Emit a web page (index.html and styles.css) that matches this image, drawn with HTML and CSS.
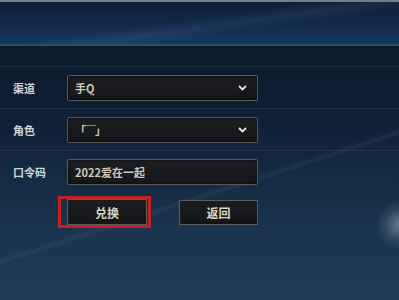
FILE: index.html
```html
<!DOCTYPE html>
<html lang="zh">
<head>
<meta charset="utf-8">
<link rel="stylesheet" href="styles.css">
</head>
<body>
<div class="screen">
  <div class="header"></div>
  <div class="form">
    <div class="row">
      <div class="label">渠道</div>
      <div class="field select"><span class="value">手Q</span>
        <svg class="chev" width="9" height="6" viewBox="0 0 9 6"><polyline points="1,1 4.5,4.5 8,1" fill="none" stroke="#e8e4dc" stroke-width="1.8"/></svg>
      </div>
    </div>
    <div class="row">
      <div class="label">角色</div>
      <div class="field select"><span class="value role">「￣」</span>
        <svg class="chev" width="9" height="6" viewBox="0 0 9 6"><polyline points="1,1 4.5,4.5 8,1" fill="none" stroke="#e8e4dc" stroke-width="1.8"/></svg>
      </div>
    </div>
    <div class="row">
      <div class="label">口令码</div>
      <div class="field"><span class="value">2022爱在一起</span></div>
    </div>
    <div class="actions">
      <div class="highlight"><div class="btn">兑换</div></div>
      <div class="btn back">返回</div>
    </div>
  </div>
  <div class="glow"></div>
</div>
</body>
</html>
```
FILE: styles.css
```css
html, body {
  margin: 0;
  padding: 0;
}
body {
  width: 399px;
  height: 300px;
  overflow: hidden;
  font-family: "Noto Sans CJK SC", "Noto Sans", sans-serif;
  background: #0c1826;
}
.screen {
  position: relative;
  width: 399px;
  height: 300px;
  overflow: hidden;
  background:
    linear-gradient(162deg, transparent 60%, rgba(120,150,180,0.10) 61%, transparent 62%),
    linear-gradient(180deg, #0b1724 0px, #0d1b2b 60px, #11233a 140px, #1a324d 220px, #1f3b58 300px);
}
.header {
  height: 42px;
  border-top: 2px solid #6f7f90;
  border-bottom: 2px solid #2c4c6c;
  background:
    linear-gradient(172deg, transparent 45%, rgba(120,160,200,0.10) 55%, transparent 65%),
    linear-gradient(180deg, #0e1f33 0%, #12294a 55%, #173a60 100%);
}
.form {
  padding-top: 20px;
}
.row {
  display: flex;
  align-items: center;
  height: 42px;
  border-top: 1px solid rgba(60, 85, 110, 0.35);
  box-sizing: border-box;
}
.label {
  width: 54px;
  padding-left: 13px;
  color: #d2d4d6;
  font-size: 11px;
  font-weight: 700;
}
.field {
  position: relative;
  width: 191px;
  height: 26px;
  box-sizing: border-box;
  border: 1.5px solid #595a58;
  border-radius: 2px;
  background: linear-gradient(180deg, #1c1e22 0%, #141619 100%);
  box-shadow: inset 0 0 3px rgba(0,0,0,0.8);
  display: flex;
  align-items: center;
  padding-left: 7px;
}
.value {
  color: #cfc8b8;
  font-size: 11px;
  font-weight: 700;
}
.role {
  letter-spacing: -1px;
}
.chev {
  position: absolute;
  right: 10px;
  top: 9px;
}
.actions {
  display: flex;
  align-items: center;
  padding-left: 58px;
  margin-top: 4px;
  height: 32px;
}
.highlight {
  width: 93px;
  height: 32px;
  box-sizing: border-box;
  border: 3px solid #c42222;
  padding: 0 1px 0 6px;
  display: flex;
  align-items: center;
}
.btn {
  width: 80px;
  height: 25px;
  box-sizing: border-box;
  border: 1.5px solid #5c5d5a;
  background: linear-gradient(180deg, #1b1d20 0%, #121416 100%);
  color: #ddd6c4;
  font-size: 12px;
  font-weight: 700;
  display: flex;
  align-items: center;
  justify-content: center;
}
.highlight .btn {
  width: 80px;
  height: 26px;
}
.back {
  margin-left: 28px;
  width: 79px;
}
.glow {
  position: absolute;
  left: 375px;
  top: 200px;
  width: 50px;
  height: 50px;
  border-radius: 50%;
  background: radial-gradient(circle, rgba(200,210,220,0.45) 0%, rgba(150,170,190,0.15) 45%, transparent 70%);
}
```
